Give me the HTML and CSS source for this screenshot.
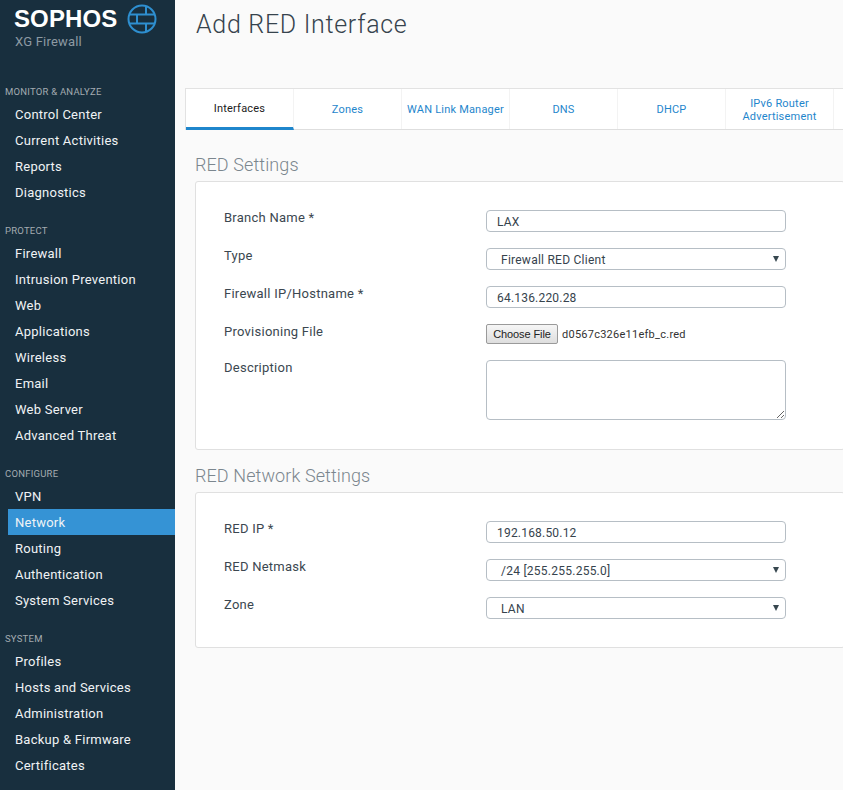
FILE: index.html
```html
<!DOCTYPE html>
<html lang="en">
<head>
<meta charset="utf-8">
<title>Add RED Interface</title>
<link rel="stylesheet" href="styles.css">
</head>
<body>
<div class="app">
  <aside class="sidebar">
    <div class="brand">
      <div class="brand-top">
        <span class="brand-name">SOPHOS</span>
        <svg class="globe" width="30" height="30" viewBox="0 0 30 30" fill="none" stroke="#2e8fd0" stroke-width="2">
          <circle cx="15" cy="15" r="13.5"/>
          <path d="M3 10.5H27M3 19.5H27M19 2V10.5M10 10.5V19.5M19 19.5V28"/>
        </svg>
      </div>
      <div class="brand-sub">XG Firewall</div>
    </div>
    <div class="section first">MONITOR &amp; ANALYZE</div>
    <a class="item">Control Center</a>
    <a class="item">Current Activities</a>
    <a class="item">Reports</a>
    <a class="item">Diagnostics</a>
    <div class="section">PROTECT</div>
    <a class="item">Firewall</a>
    <a class="item">Intrusion Prevention</a>
    <a class="item">Web</a>
    <a class="item">Applications</a>
    <a class="item">Wireless</a>
    <a class="item">Email</a>
    <a class="item">Web Server</a>
    <a class="item">Advanced Threat</a>
    <div class="section">CONFIGURE</div>
    <a class="item">VPN</a>
    <a class="item active">Network</a>
    <a class="item">Routing</a>
    <a class="item">Authentication</a>
    <a class="item">System Services</a>
    <div class="section">SYSTEM</div>
    <a class="item">Profiles</a>
    <a class="item">Hosts and Services</a>
    <a class="item">Administration</a>
    <a class="item">Backup &amp; Firmware</a>
    <a class="item">Certificates</a>
  </aside>
  <main class="main">
    <h1 class="title">Add RED Interface</h1>
    <nav class="tabs">
      <a class="tab current">Interfaces</a>
      <a class="tab">Zones</a>
      <a class="tab">WAN Link Manager</a>
      <a class="tab">DNS</a>
      <a class="tab">DHCP</a>
      <a class="tab">IPv6 Router<br>Advertisement</a>
    </nav>
    <div class="content">
      <h2 class="heading">RED Settings</h2>
      <section class="panel settings">
        <label class="lbl">Branch Name *</label>
        <div class="field"><input class="input" type="text" value="LAX"></div>
        <label class="lbl">Type</label>
        <div class="field"><div class="select">Firewall RED Client</div></div>
        <label class="lbl">Firewall IP/Hostname *</label>
        <div class="field"><input class="input" type="text" value="64.136.220.28"></div>
        <label class="lbl">Provisioning File</label>
        <div class="field file"><button class="choose" type="button">Choose File</button><span class="filename">d0567c326e11efb_c.red</span></div>
        <label class="lbl">Description</label>
        <div class="field"><textarea class="area"></textarea></div>
      </section>
      <h2 class="heading second">RED Network Settings</h2>
      <section class="panel network">
        <label class="lbl">RED IP *</label>
        <div class="field"><input class="input" type="text" value="192.168.50.12"></div>
        <label class="lbl">RED Netmask</label>
        <div class="field"><div class="select">/24 [255.255.255.0]</div></div>
        <label class="lbl">Zone</label>
        <div class="field"><div class="select">LAN</div></div>
      </section>
    </div>
  </main>
</div>
</body>
</html>
```
FILE: styles.css
```css
* { box-sizing: border-box; }
html, body { margin: 0; padding: 0; height: 100%; overflow: hidden; }
body { font-family: Roboto, "Liberation Sans", sans-serif; background: #fafafa; color: #2c3e4a; }
.app { display: flex; height: 790px; width: 843px; overflow: hidden; }

.sidebar { width: 175px; flex: none; background: #182f3e; color: #fff; overflow: hidden; }
.brand { height: 85px; padding: 4px 0 0 14px; }
.brand-top { display: flex; align-items: center; height: 30px; }
.brand-name { font-family: "Liberation Sans", sans-serif; font-weight: 700; font-size: 24px; letter-spacing: 0.1px; width: 113px; color: #fff; }
.globe { flex: none; }
.brand-sub { font-size: 13px; color: #8d9aa3; margin-left: 1px; letter-spacing: 0.2px; line-height: 15px; }
.section { font-size: 9.5px; letter-spacing: 0.23px; color: #a3abb1; padding-left: 5px; height: 14px; line-height: 14px; margin: 18px 0 3px; }
.section.first { margin-top: 0; }
.item { display: block; height: 26px; line-height: 26px; font-size: 13px; letter-spacing: 0.25px; padding-left: 15px; color: #f0f3f5; }
.item.active { margin: -1px 0 1px 8px; padding-left: 7px; line-height: 28px; background: #3593d5; }

.main { flex: 1; min-width: 0; }
.title { margin: 0; height: 88px; padding: 9px 0 0 21px; font-size: 25px; line-height: 31px; font-weight: 300; letter-spacing: 0.7px; color: #36434d; }
.tabs { display: flex; margin-left: 10px; height: 42px; background: #fff; border-top: 1px solid #e2e2e2; border-bottom: 1px solid #dedede; border-left: 1px solid #e2e2e2; }
.tab { width: 108px; flex: none; display: flex; align-items: center; justify-content: center; text-align: center; font-size: 11px; line-height: 13px; letter-spacing: 0.2px; color: #1f86cc; border-right: 1px solid #f3f3f3; padding-top: 1px; }
.tab.current { color: #1c1c1c; border-bottom: 3px solid #1f86cc; padding-bottom: 0; padding-top: 0; height: 41px; }

.content { padding-left: 20px; width: 668px; }
.heading { margin: 0; font-size: 18px; font-weight: 300; line-height: 22px; color: #7b868e; padding: 24px 0 5px 0; height: 51px; letter-spacing: 0.1px; }
.heading.second { padding-top: 15px; height: 42px; }
.panel { display: grid; grid-template-columns: 262px 300px; margin-right: -2px; padding: 28px 0 0 28px; background: #fff; border: 1px solid #e0e0e0; border-radius: 3px; align-content: start; row-gap: 16px; }
.settings { height: 269px; }
.network { height: 156px; }
.lbl { font-size: 13px; letter-spacing: 0.25px; color: #3b4750; line-height: 16px; }
.field { min-height: 20px; }
.input { display: block; width: 300px; height: 22px; padding: 1px 10px 0; border: 1px solid #b6bec5; border-radius: 4px; background: #fff; font: 12px Roboto, sans-serif; letter-spacing: 0.2px; color: #36434d; outline: none; }
.select { position: relative; width: 300px; height: 22px; padding-left: 14px; line-height: 22px; border: 1px solid #b6bec5; border-radius: 4px; background: #fff; font-size: 12px; letter-spacing: 0.25px; color: #36434d; }
.select::after { content: ""; position: absolute; right: 6px; top: 7px; border-left: 3px solid transparent; border-right: 3px solid transparent; border-top: 6px solid #37474f; }
.file { display: flex; align-items: center; height: 20px; }
.choose { width: 72px; height: 20px; padding: 0; font: 11px "Liberation Sans", sans-serif; letter-spacing: -0.1px; color: #222; background: linear-gradient(#f6f6f6, #dedede); border: 1px solid #9a9a9a; border-radius: 2px; }
.filename { margin-left: 4px; font-size: 11px; letter-spacing: 0.25px; color: #333; }
.area { display: block; width: 300px; height: 60px; border: 1px solid #b6bec5; border-radius: 4px; background: #fff; outline: none; }
```
